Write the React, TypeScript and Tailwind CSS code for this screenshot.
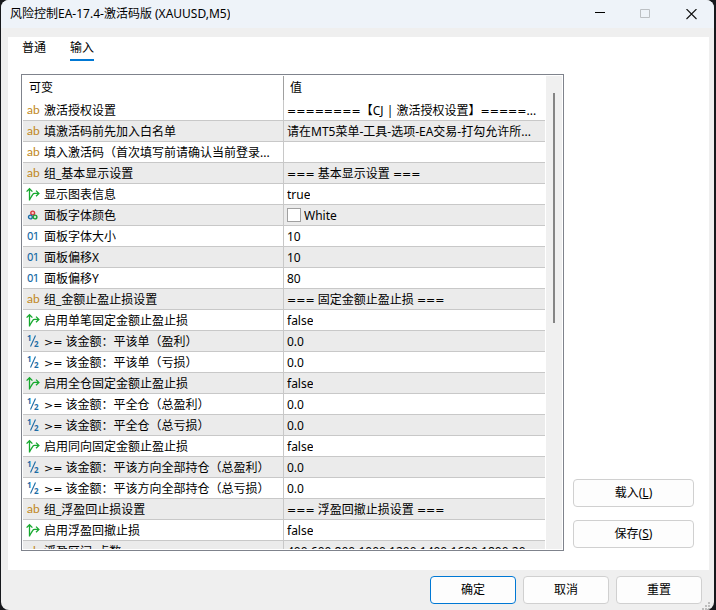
import { useState } from 'react';

type ParamType = 'string' | 'bool' | 'color' | 'int' | 'double';

interface Param {
  type: ParamType;
  name: string;
  value: string;
}

const PARAMS: Param[] = [
  { type: 'string', name: '激活授权设置', value: '========【CJ | 激活授权设置】=====...' },
  { type: 'string', name: '填激活码前先加入白名单', value: '请在MT5菜单-工具-选项-EA交易-打勾允许所...' },
  { type: 'string', name: '填入激活码（首次填写前请确认当前登录...', value: '' },
  { type: 'string', name: '组_基本显示设置', value: '=== 基本显示设置 ===' },
  { type: 'bool', name: '显示图表信息', value: 'true' },
  { type: 'color', name: '面板字体颜色', value: 'White' },
  { type: 'int', name: '面板字体大小', value: '10' },
  { type: 'int', name: '面板偏移X', value: '10' },
  { type: 'int', name: '面板偏移Y', value: '80' },
  { type: 'string', name: '组_金额止盈止损设置', value: '=== 固定金额止盈止损 ===' },
  { type: 'bool', name: '启用单笔固定金额止盈止损', value: 'false' },
  { type: 'double', name: '>= 该金额：平该单（盈利）', value: '0.0' },
  { type: 'double', name: '>= 该金额：平该单（亏损）', value: '0.0' },
  { type: 'bool', name: '启用全仓固定金额止盈止损', value: 'false' },
  { type: 'double', name: '>= 该金额：平全仓（总盈利）', value: '0.0' },
  { type: 'double', name: '>= 该金额：平全仓（总亏损）', value: '0.0' },
  { type: 'bool', name: '启用同向固定金额止盈止损', value: 'false' },
  { type: 'double', name: '>= 该金额：平该方向全部持仓（总盈利）', value: '0.0' },
  { type: 'double', name: '>= 该金额：平该方向全部持仓（总亏损）', value: '0.0' },
  { type: 'string', name: '组_浮盈回止损设置', value: '=== 浮盈回撤止损设置 ===' },
  { type: 'bool', name: '启用浮盈回撤止损', value: 'false' },
  { type: 'string', name: '浮盈区间_点数', value: '400,600,800,1000,1200,1400,1600,1800,20...' },
];

const TABS = ['普通', '输入'];

function TypeIcon({ type }: { type: ParamType }) {
  if (type === 'string') {
    return <span className="font-['Lato'] text-[12px] text-[#c0861a]">ab</span>;
  }
  if (type === 'int') {
    return <span className="font-['Inter'] text-[10px] font-medium text-[#1c6ca6]">01</span>;
  }
  if (type === 'double') {
    return (
      <svg width="13" height="14" viewBox="0 0 13 14" className="overflow-visible font-['Open_Sans'] text-[8px] font-bold" fill="#1c6ca6">
        <text x="0" y="7">1</text>
        <text x="7" y="13">2</text>
        <path d="M8.5 1.5L3.5 12.5" stroke="#1c6ca6" strokeWidth="1.1" />
      </svg>
    );
  }
  if (type === 'bool') {
    return (
      <svg width="14" height="14" viewBox="0 0 14 14" fill="none" stroke="#17a92f" strokeWidth="1.3" className="-ml-px shrink-0">
        <path d="M3.5 13.5V1.8M0.6 4.6L3.5 1.7L6.4 4.6" />
        <path d="M3.5 12.6L6.8 7.4Q7.4 6.4 8.6 6.4H12.8M10 3.6L12.9 6.4L10 9.2" />
      </svg>
    );
  }
  return (
    <svg width="12" height="12" viewBox="0 0 12 12" fill="none" strokeWidth="1.4">
      <circle cx="5.7" cy="4" r="1.9" stroke="#d8383c" fill="#f6caca" />
      <circle cx="3.4" cy="8" r="1.9" stroke="#1c6ca6" fill="#c5dcee" />
      <circle cx="8" cy="8" r="1.9" stroke="#1a9d35" fill="#caead0" />
    </svg>
  );
}

// Operator signs are drawn in a wider face than the rest of the text
function Label({ text }: { text: string }) {
  return (
    <span className="overflow-hidden pt-0.5 whitespace-nowrap">
      {text.split(/([=>]+)/).map((part, i) =>
        i % 2 === 1 ? (
          <span key={i} className="font-['DejaVu_Sans'] text-[11px]">{part}</span>
        ) : (
          part
        )
      )}
    </span>
  );
}

function TitleBar() {
  return (
    <header className="flex h-7 shrink-0 items-center justify-between bg-[#eef3f9] pl-[9px]">
      <h1 className="truncate">风险控制EA-17.4-激活码版 (XAUUSD,M5)</h1>
      <div className="flex h-full shrink-0">
        <button className="flex w-[46px] items-center justify-center" aria-label="最小化">
          <svg width="11" height="11" viewBox="0 0 11 11" stroke="#000">
            <path d="M1 3.5H11" />
          </svg>
        </button>
        <button className="flex w-[46px] items-center justify-center" aria-label="最大化" disabled>
          <svg width="11" height="11" viewBox="0 0 11 11" fill="none" stroke="#bcc0c4">
            <path d="M0.5 0.5H9.5V8.5H0.5Z" />
          </svg>
        </button>
        <button className="flex w-[46px] items-center justify-center" aria-label="关闭">
          <svg width="11" height="11" viewBox="0 0 11 11" stroke="#111" strokeWidth="1.1">
            <path d="M0.5 0L10.5 10M10.5 0L0.5 10" />
          </svg>
        </button>
      </div>
    </header>
  );
}

function ParamTable() {
  return (
    <div className="flex min-w-0 flex-1 border border-[#7f838c] bg-white p-px">
      <div className="min-w-0 flex-1 overflow-hidden">
        <table className="w-full table-fixed border-separate border-spacing-0 text-left">
          <thead>
            <tr className="h-6">
              <th className="w-1/2 border-r border-[#a0a0a0] p-0 pl-1.5 font-normal">可变</th>
              <th className="p-0 pl-1.5 font-normal">值</th>
            </tr>
          </thead>
          <tbody className="leading-[18px]">
            {PARAMS.map((p, i) => (
              <tr key={i} className="h-[21px] even:bg-[#ebebeb]">
                <td className="border-r border-b border-[#c8c8c8] p-0 pl-1">
                  <div className="flex h-5 items-center">
                    <span className="flex h-[18px] w-[17px] shrink-0 items-center">
                      <TypeIcon type={p.type} />
                    </span>
                    <Label text={p.name} />
                  </div>
                </td>
                <td className="border-b border-[#c8c8c8] p-0 pl-[3px]">
                  <div className="flex h-5 items-center gap-[3px]">
                    {p.type === 'color' && <span className="size-[14px] shrink-0 border border-[#a0a0a0] bg-white" />}
                    <Label text={p.value} />
                  </div>
                </td>
              </tr>
            ))}
          </tbody>
        </table>
      </div>
      <div className="ml-px flex w-4 shrink-0 justify-center bg-[#f0f0f0] pt-[17px]">
        <div className="h-[230px] w-0.5 bg-[#858585]" />
      </div>
    </div>
  );
}

function DialogButton({ children, primary }: { children: React.ReactNode; primary?: boolean }) {
  return (
    <button className={`h-7 w-full rounded border bg-[#fdfdfd] ${primary ? 'border-[#0078d4]' : 'border-[#d0d0d0]'}`}>
      {children}
    </button>
  );
}

export default function App() {
  const [activeTab, setActiveTab] = useState('输入');

  return (
    <div className="h-screen bg-[#16181c] pr-0.5 pl-px font-['Noto_Sans','Noto_Sans_CJK_SC',sans-serif] text-xs leading-5 text-black">
      <div className="relative flex h-full flex-col overflow-hidden rounded-lg bg-[#efefef]">
        <TitleBar />

        <main className="mt-[9px] mr-[5px] ml-[7px] flex min-h-0 flex-1 flex-col bg-white pr-[15px] pb-[19px] pl-[13px]">
          <nav className="flex gap-6 pl-px" role="tablist">
            {TABS.map((tab) => (
              <button
                key={tab}
                role="tab"
                aria-selected={tab === activeTab}
                onClick={() => setActiveTab(tab)}
                className={`border-b-2 pt-px pb-px ${tab === activeTab ? 'border-[#0078d4]' : 'border-transparent'}`}
              >
                {tab}
              </button>
            ))}
          </nav>

          <div className="mt-[13px] flex min-h-0 flex-1 gap-[9px]">
            <ParamTable />
            <div className="flex w-[121px] shrink-0 flex-col justify-end gap-[13px] pb-[3px]">
              <DialogButton>载入(<u>L</u>)</DialogButton>
              <DialogButton>保存(<u>S</u>)</DialogButton>
            </div>
          </div>
        </main>

        <footer className="flex shrink-0 justify-end py-1.5 pr-3">
          <div className="grid w-[272px] grid-cols-3 gap-[7px]">
            <DialogButton primary>确定</DialogButton>
            <DialogButton>取消</DialogButton>
            <DialogButton>重置</DialogButton>
          </div>
        </footer>

        <svg width="10" height="8" viewBox="0 0 10 8" fill="#bdbdbd" className="absolute right-0.5 bottom-0">
          <path d="M6 0h2v2h-2zM3 3h2v2h-2zM6 3h2v2h-2zM0 6h2v2h-2zM3 6h2v2h-2zM6 6h2v2h-2z" />
        </svg>
      </div>
    </div>
  );
}
